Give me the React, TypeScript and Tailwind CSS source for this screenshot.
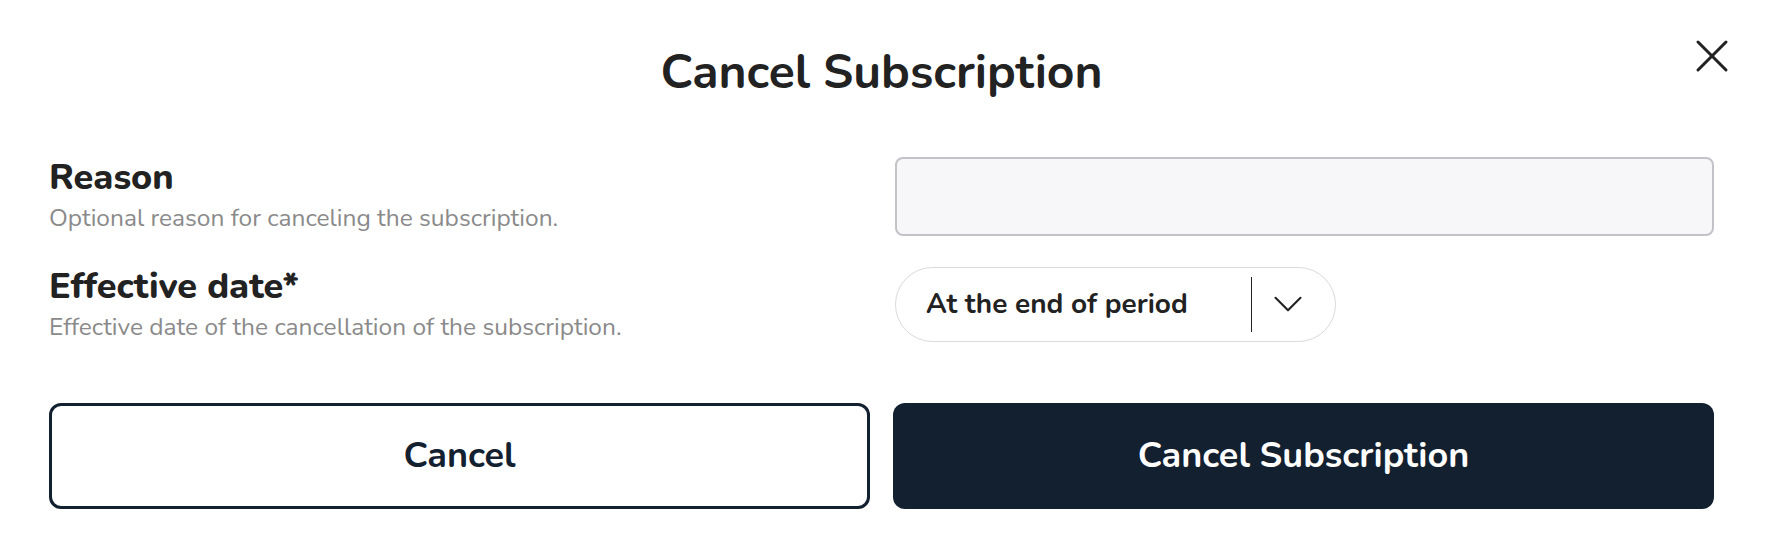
import { X, ChevronDown } from "lucide-react";

const font = { fontFamily: '"Nunito", "Lato", "Noto Sans", sans-serif' };

export default function App() {
  return (
    <div
      className="w-[1766px] h-[538px] bg-white text-[#222222] pl-[49px] pr-[52px] pt-[37px]"
      style={font}
    >
      <div className="relative flex items-center justify-center h-[70px]">
        <h2 className="text-[48px] font-bold leading-none">Cancel Subscription</h2>
        <button className="absolute right-[-26px] top-[-9px] w-[56px] h-[56px] flex items-center justify-center text-[#222222]">
          <X size={56} strokeWidth={1.3} />
        </button>
      </div>

      <div className="mt-[48px] grid grid-cols-2 gap-x-[27px] gap-y-[26px] items-center">
        <div className="flex flex-col pb-[3px]">
          <span className="text-[36px] font-extrabold leading-[46px]">Reason</span>
          <span className="text-[24.5px] text-[#8a8a8a] leading-[34px]">
            Optional reason for canceling the subscription.
          </span>
        </div>
        <input
          type="text"
          className="h-[79px] w-full rounded-[8px] border-2 border-[#c2c2c8] bg-[#f7f7f9] px-4 text-[24px] outline-none"
        />

        <div className="flex flex-col">
          <span className="text-[36px] font-extrabold leading-[46px]">Effective date*</span>
          <span className="text-[24.5px] text-[#8a8a8a] leading-[34px]">
            Effective date of the cancellation of the subscription.
          </span>
        </div>
        <div className="flex items-center w-[441px] h-[75px] rounded-full border border-[#dadada] bg-white pl-[30px] pr-[11px]">
          <span className="flex-1 text-[28px] font-bold">At the end of period</span>
          <span className="w-px h-[55px] bg-[#222222]" />
          <span className="w-[72px] flex items-center justify-center">
            <ChevronDown size={50} strokeWidth={1} />
          </span>
        </div>
      </div>

      <div className="mt-[59px] grid grid-cols-2 gap-[23px]">
        <button className="h-[106px] rounded-[12px] border-[3px] border-[#132030] bg-white text-[#132030] text-[36px] font-bold">
          Cancel
        </button>
        <button className="h-[106px] rounded-[12px] bg-[#132030] text-white text-[36px] font-bold">
          Cancel Subscription
        </button>
      </div>
    </div>
  );
}
